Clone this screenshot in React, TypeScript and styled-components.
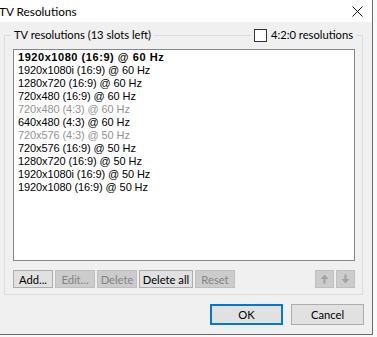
import styled, { createGlobalStyle } from 'styled-components'

const uiFont = `Lato, "Liberation Sans", sans-serif`
const listFont = `"Liberation Sans", Arial, sans-serif`

const GlobalStyle = createGlobalStyle`
  html, body {
    margin: 0;
    padding: 0;
  }
  body {
    width: 377px;
    height: 337px;
    overflow: hidden;
    background: #f9f9f9;
  }
`

type Resolution = { label: string; bold?: boolean; disabled?: boolean }

const resolutions: Resolution[] = [
  { label: '1920x1080 (16:9) @ 60 Hz', bold: true },
  { label: '1920x1080i (16:9) @ 60 Hz' },
  { label: '1280x720 (16:9) @ 60 Hz' },
  { label: '720x480 (16:9) @ 60 Hz' },
  { label: '720x480 (4:3) @ 60 Hz', disabled: true },
  { label: '640x480 (4:3) @ 60 Hz' },
  { label: '720x576 (4:3) @ 50 Hz', disabled: true },
  { label: '720x576 (16:9) @ 50 Hz' },
  { label: '1280x720 (16:9) @ 50 Hz' },
  { label: '1920x1080i (16:9) @ 50 Hz' },
  { label: '1920x1080 (16:9) @ 50 Hz' },
]

const ArrowIcon = ({ down }: { down?: boolean }) => (
  <svg width="9" height="10" viewBox="0 0 9 10">
    <path
      d="M4.5 0.5 L8.5 5 H5.6 V9.5 H3.4 V5 H0.5 Z"
      fill="#a3a3a3"
      transform={down ? 'rotate(180 4.5 5)' : undefined}
    />
  </svg>
)

export default function App() {
  return (
    <>
      <GlobalStyle />
      <Window>
        <TitleBar>
          <Title>TV Resolutions</Title>
          <CloseButton>
            <svg width="11" height="11" viewBox="0 0 11 11">
              <path d="M0.5 0.5 L10.5 10.5 M10.5 0.5 L0.5 10.5" stroke="#111" strokeWidth="1" />
            </svg>
          </CloseButton>
        </TitleBar>
        <Body>
          <GroupBox>
            <GroupHeader>
              <Legend>TV resolutions (13 slots left)</Legend>
              <CheckLegend>
                <CheckBox />
                <span>4:2:0 resolutions</span>
              </CheckLegend>
            </GroupHeader>
            <ListBox>
              {resolutions.map(r => (
                <ListRow key={r.label} $bold={r.bold} $disabled={r.disabled}>
                  {r.label}
                </ListRow>
              ))}
            </ListBox>
            <ButtonRow>
              <SmallButton $width={40}>Add...</SmallButton>
              <SmallButton $width={40} disabled>
                Edit...
              </SmallButton>
              <SmallButton $width={40} disabled>
                Delete
              </SmallButton>
              <SmallButton $width={54}>Delete all</SmallButton>
              <SmallButton $width={40} disabled>
                Reset
              </SmallButton>
              <ArrowGroup>
                <SmallButton $width={19} disabled>
                  <ArrowIcon />
                </SmallButton>
                <SmallButton $width={19} disabled>
                  <ArrowIcon down />
                </SmallButton>
              </ArrowGroup>
            </ButtonRow>
          </GroupBox>
          <Footer>
            <DialogButton $default>OK</DialogButton>
            <DialogButton>Cancel</DialogButton>
          </Footer>
        </Body>
      </Window>
    </>
  )
}

const Window = styled.div`
  width: 372px;
  height: 334px;
  display: flex;
  flex-direction: column;
  background: #f0f0f0;
  border-right: 1px solid #6a6a6a;
  border-bottom: 1px solid #6a6a6a;
  font-family: ${uiFont};
  font-size: 11.2px;
  color: #000;
`

const TitleBar = styled.div`
  height: 22px;
  flex: none;
  display: flex;
  align-items: center;
  justify-content: space-between;
  background: #fff;
`

const Title = styled.div`
  font-size: 11.8px;
  margin-left: -1px;
`

const CloseButton = styled.div`
  width: 11px;
  height: 11px;
  margin-right: 9px;
  display: flex;
`

const Body = styled.div`
  flex: 1;
  display: flex;
  flex-direction: column;
  padding: 13px 0 0 4px;
`

const GroupBox = styled.div`
  width: 359px;
  box-sizing: border-box;
  border: 1px solid #dcdcdc;
  padding: 0 7px 6px 8px;
`

const GroupHeader = styled.div`
  height: 14px;
  margin: -8px -1px 0 -2px;
  display: flex;
  align-items: center;
  justify-content: space-between;
`

const Legend = styled.span`
  background: #f0f0f0;
  padding: 0 3px;
  line-height: 14px;
`

const CheckLegend = styled.label`
  display: flex;
  align-items: center;
  gap: 4px;
  background: #f0f0f0;
  padding: 0 3px;
  line-height: 14px;
`

const CheckBox = styled.span`
  width: 11px;
  height: 11px;
  border: 1px solid #333;
  background: #fff;
`

const ListBox = styled.div`
  margin-top: 7px;
  height: 212px;
  box-sizing: border-box;
  border: 1px solid #828790;
  background: #fff;
  padding: 1px 4px;
`

const ListRow = styled.div<{ $bold?: boolean; $disabled?: boolean }>`
  height: 13px;
  line-height: 13px;
  font-family: ${listFont};
  font-size: 11px;
  white-space: nowrap;
  font-weight: ${({ $bold }) => ($bold ? 700 : 400)};
  letter-spacing: ${({ $bold }) => ($bold ? '0.55px' : '-0.1px')};
  color: ${({ $disabled }) => ($disabled ? '#939393' : '#000')};
`

const ButtonRow = styled.div`
  margin-top: 9px;
  display: flex;
  gap: 2px;
`

const ArrowGroup = styled.div`
  margin-left: auto;
  display: flex;
  gap: 2px;
`

const SmallButton = styled.button<{ $width: number }>`
  width: ${({ $width }) => $width}px;
  height: 18px;
  padding: 0;
  box-sizing: border-box;
  display: flex;
  align-items: center;
  justify-content: center;
  font-family: ${uiFont};
  font-size: 11.2px;
  background: #e1e1e1;
  border: 1px solid #adadad;
  color: #000;
  &:disabled {
    background: #cccccc;
    border-color: #bfbfbf;
    color: #838383;
  }
`

const Footer = styled.div`
  margin-top: 9px;
  padding-right: 8px;
  display: flex;
  justify-content: flex-end;
  gap: 8px;
`

const DialogButton = styled.button<{ $default?: boolean }>`
  width: 73px;
  height: 21px;
  padding: 0;
  box-sizing: border-box;
  font-family: ${uiFont};
  font-size: 11.2px;
  color: #000;
  background: #e1e1e1;
  border: ${({ $default }) => ($default ? '2px solid #0078d7' : '1px solid #adadad')};
`
